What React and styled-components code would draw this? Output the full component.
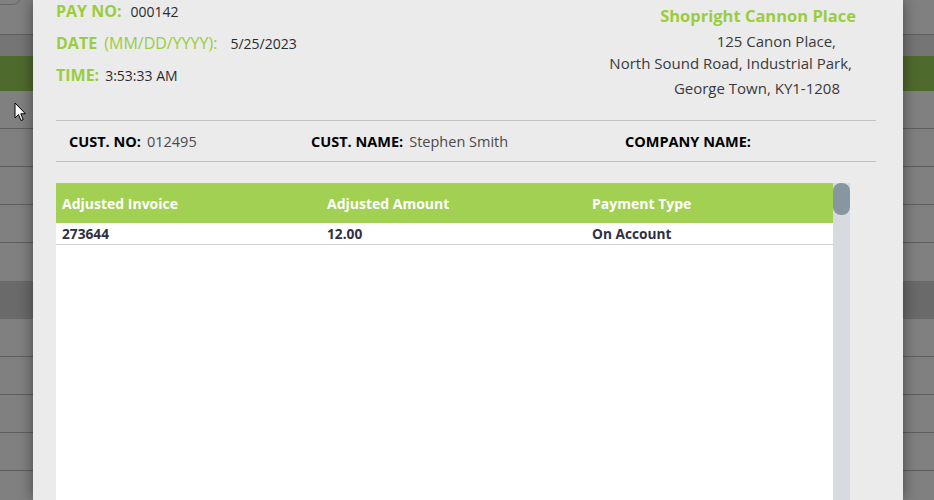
import React from "react";
import styled, { createGlobalStyle } from "styled-components";

const Global = createGlobalStyle`
  html, body { margin: 0; padding: 0; }
  body {
    width: 934px; height: 500px; overflow: hidden;
    font-family: "Open Sans", "Noto Sans", sans-serif;
    background: #7f7f7f;
  }
`;

const Backdrop = styled.div`
  display: flex;
  flex-direction: column;
  width: 934px;
  height: 500px;
  overflow: hidden;
  background: #7f7f7f;
`;

const BgRow = styled.div`
  flex: 0 0 ${(p) => p.$h}px;
  box-sizing: border-box;
  background: ${(p) => p.$bg || "#808080"};
  border-bottom: ${(p) => (p.$line ? "1px solid #5f5f5f" : "none")};
  position: relative;
`;

const Pill = styled.div`
  position: absolute;
  left: -20px;
  top: -30px;
  width: 40px;
  height: 33px;
  border: 1px solid #666;
  border-radius: 10px;
`;

const Cursor = styled.svg`
  position: absolute;
  left: 14px;
  top: 102px;
`;

const Modal = styled.div`
  position: absolute;
  left: 33px;
  top: 0;
  width: 870px;
  height: 500px;
  box-sizing: border-box;
  background: #ebebeb;
  box-shadow: 0 0 14px rgba(0, 0, 0, 0.45);
  padding: 0 27px 0 23px;
  display: flex;
  flex-direction: column;
`;

const Top = styled.div`
  display: flex;
  justify-content: space-between;
  height: 120px;
  border-bottom: 1px solid #c2c2c2;
`;

const InfoCol = styled.div`
  display: flex;
  flex-direction: column;
`;

const InfoLine = styled.div`
  display: flex;
  align-items: baseline;
  height: 32px;
  line-height: 22px;
`;

const Label = styled.span`
  color: #9acd3c;
  font-size: 16px;
  font-weight: ${(p) => (p.$light ? 400 : 700)};
  white-space: pre;
  margin-right: ${(p) => p.$mr || 0}px;
`;

const Value = styled.span`
  color: #2b2b2b;
  font-size: 14px;
  margin-left: ${(p) => p.$ml || 7}px;
`;

const AddressCol = styled.div`
  display: flex;
  flex-direction: column;
  align-items: flex-end;
  padding-top: 5px;
  padding-right: 20px;
`;

const Company = styled.div`
  color: #9acd3c;
  font-size: 16.5px;
  font-weight: 700;
  line-height: 22px;
  margin-bottom: 3px;
`;

const AddrLine = styled.div`
  color: #3a3a3a;
  font-size: 15px;
  line-height: ${(p) => p.$lh || 22}px;
  margin-right: ${(p) => p.$mr}px;
`;

const CustRow = styled.div`
  display: grid;
  grid-template-columns: 242px 314px 1fr;
  align-items: center;
  height: 40px;
  padding-left: 13px;
  border-bottom: 1px solid #c2c2c2;
`;

const CustItem = styled.div`
  display: flex;
  align-items: baseline;
`;

const CustLabel = styled.span`
  color: #000;
  font-size: 14.5px;
  font-weight: 700;
`;

const CustValue = styled.span`
  color: #4a4a4a;
  font-size: 14.5px;
  margin-left: 6px;
`;

const TableWrap = styled.div`
  display: flex;
  margin-top: 21px;
  flex: 1;
`;

const Table = styled.div`
  flex: 0 0 777px;
  background: #fff;
  display: flex;
  flex-direction: column;
`;

const Grid = styled.div`
  display: grid;
  grid-template-columns: 265px 265px 1fr;
  align-items: center;
  height: ${(p) => p.$h}px;
  background: ${(p) => p.$bg || "transparent"};
  border-bottom: ${(p) => (p.$border ? "1px solid #d0d0d0" : "none")};
  box-sizing: border-box;
`;

const HeadCell = styled.div`
  color: #fff;
  font-size: 14px;
  font-weight: 700;
  padding-left: 6px;
  padding-top: 1px;
`;

const Cell = styled.div`
  color: #2f2f45;
  font-size: 13.7px;
  font-weight: 700;
  padding-left: 6px;
`;

const Scrollbar = styled.div`
  flex: 0 0 17px;
  background: #d7dbdf;
  position: relative;
`;

const Thumb = styled.div`
  position: absolute;
  left: 0;
  top: 0;
  width: 17px;
  height: 32px;
  border-radius: 8px;
  background: #8896a2;
`;

const bgRows = [
  { h: 35, line: true },
  { h: 21, bg: "#757575" },
  { h: 35, bg: "#4f6a2d" },
  { h: 38, line: true },
  { h: 38, line: true },
  { h: 38, line: true },
  { h: 38, line: true },
  { h: 38, line: false },
  { h: 38, bg: "#6a6a6a" },
  { h: 38, line: true },
  { h: 38, line: true },
  { h: 38, line: true },
  { h: 38, line: true },
  { h: 38, line: true },
];

export default function App() {
  return (
    <>
      <Global />
      <Backdrop>
        {bgRows.map((r, i) => (
          <BgRow key={i} $h={r.h} $bg={r.bg} $line={r.line}>
            {i === 0 && <Pill />}
          </BgRow>
        ))}
      </Backdrop>
      <Cursor width="13" height="20" viewBox="0 0 13 20">
        <path
          d="M1 1 L1 16 L4.5 12.5 L7 18.5 L9.2 17.6 L6.8 11.8 L11.5 11.8 Z"
          fill="#fff"
          stroke="#000"
          strokeWidth="1"
          strokeLinejoin="round"
        />
      </Cursor>
      <Modal>
        <Top>
          <InfoCol>
            <InfoLine>
              <Label>PAY NO:</Label>
              <Value $ml={9}>000142</Value>
            </InfoLine>
            <InfoLine>
              <Label $mr={3}>DATE </Label>
              <Label $light>(MM/DD/YYYY):</Label>
              <Value $ml={13}>5/25/2023</Value>
            </InfoLine>
            <InfoLine>
              <Label>TIME:</Label>
              <Value $ml={6}>3:53:33 AM</Value>
            </InfoLine>
          </InfoCol>
          <AddressCol>
            <Company>Shopright Cannon Place</Company>
            <AddrLine $mr={20}>125 Canon Place,</AddrLine>
            <AddrLine $mr={4} $lh={22}>North Sound Road, Industrial Park,</AddrLine>
            <AddrLine $mr={16} $lh={28}>George Town, KY1-1208</AddrLine>
          </AddressCol>
        </Top>
        <CustRow>
          <CustItem>
            <CustLabel>CUST. NO:</CustLabel>
            <CustValue>012495</CustValue>
          </CustItem>
          <CustItem>
            <CustLabel>CUST. NAME:</CustLabel>
            <CustValue>Stephen Smith</CustValue>
          </CustItem>
          <CustItem>
            <CustLabel>COMPANY NAME:</CustLabel>
          </CustItem>
        </CustRow>
        <TableWrap>
          <Table>
            <Grid $h={40} $bg="#a2d053">
              <HeadCell>Adjusted Invoice</HeadCell>
              <HeadCell>Adjusted Amount</HeadCell>
              <HeadCell>Payment Type</HeadCell>
            </Grid>
            <Grid $h={22} $border>
              <Cell>273644</Cell>
              <Cell>12.00</Cell>
              <Cell>On Account</Cell>
            </Grid>
          </Table>
          <Scrollbar>
            <Thumb />
          </Scrollbar>
        </TableWrap>
      </Modal>
    </>
  );
}
